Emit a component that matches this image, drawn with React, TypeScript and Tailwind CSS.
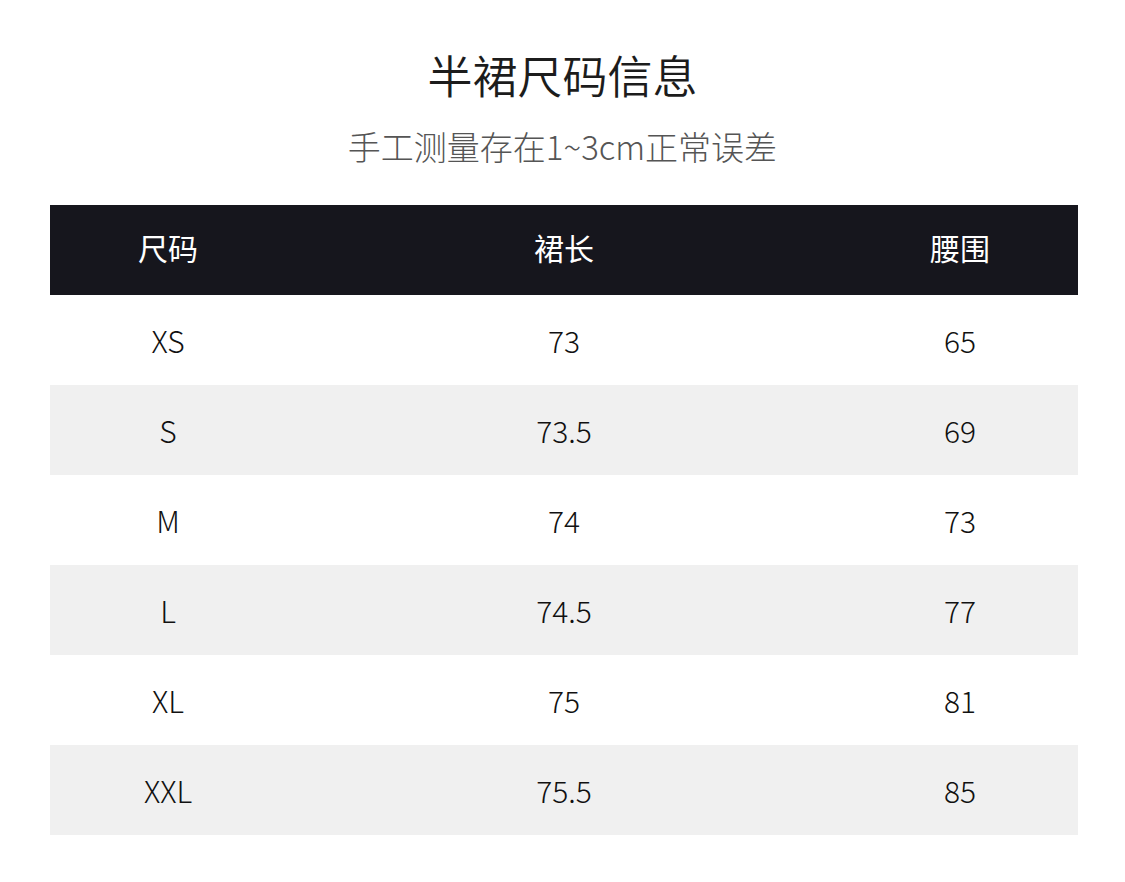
const rows = [
  ['XS', '73', '65'],
  ['S', '73.5', '69'],
  ['M', '74', '73'],
  ['L', '74.5', '77'],
  ['XL', '75', '81'],
  ['XXL', '75.5', '85'],
];

const App = () => {
  return (
    <div
      className="w-[1125px] h-[882px] bg-white text-[#1a1a1a]"
      style={{ fontFamily: '"Noto Sans CJK SC", "Noto Sans", sans-serif' }}
    >
      <div className="flex flex-col items-center pt-[46px]">
        <h1 className="text-[45px] leading-[58px] font-[350] text-[#1c1c1c]">半裙尺码信息</h1>
        <p className="mt-[20px] text-[33px] leading-[44px] font-light text-[#555]">手工测量存在1~3cm正常误差</p>
      </div>

      <div className="mx-[50px] mt-[37px] w-[1028px]">
        <div className="grid grid-cols-[236px_1fr_236px] h-[90px] items-center pb-[6px] bg-[#16161d] text-white text-[30px] font-normal">
          <div className="text-center">尺码</div>
          <div className="text-center">裙长</div>
          <div className="text-center">腰围</div>
        </div>
        {rows.map((r, i) => (
          <div
            key={r[0]}
            className={`grid grid-cols-[236px_1fr_236px] h-[90px] items-center text-[30px] font-light text-[#111] ${
              i % 2 === 1 ? 'bg-[#f0f0f0]' : 'bg-white'
            }`}
          >
            <div className="text-center">{r[0]}</div>
            <div className="text-center">{r[1]}</div>
            <div className="text-center">{r[2]}</div>
          </div>
        ))}
      </div>
    </div>
  );
};

export default App;
